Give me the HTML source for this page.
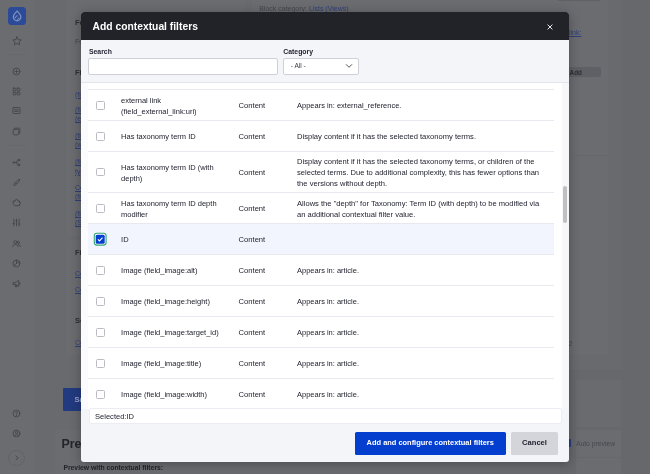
<!DOCTYPE html>
<html lang="en">
<head>
<meta charset="utf-8">
<title>Add contextual filters</title>
<style>
*{box-sizing:border-box;margin:0;padding:0}
html,body{width:650px;height:474px;overflow:hidden;background:#6a6b6f;font-family:"Liberation Sans",Arial,sans-serif;color:#222330}
.abs{position:absolute}
#page{position:absolute;left:0;top:0;width:650px;height:474px;overflow:hidden;background:#696a6e;filter:blur(.45px)}
/* ---------- dimmed page behind overlay ---------- */
#sidebar{position:absolute;z-index:2;left:0;top:0;width:34px;height:474px;background:#6b6c70}
.logo{position:absolute;left:7.600px;top:7.200px;width:18.200px;height:18.200px;border-radius:3.500px;background:#2b4a97}
.sico{position:absolute;left:11.5px;width:10px;height:10px}
.sico svg{display:block;width:10px;height:10px;fill:none;stroke:#44454a;stroke-width:1.05;stroke-linecap:round;stroke-linejoin:round}
.ssep{position:absolute;left:8px;width:18px;height:1px;background:#66676b}
.card{position:absolute;background:#6b6c70;border-radius:3px}
.bgt{position:absolute;white-space:nowrap;color:#2e2f34}
.lnk{color:#313f7a;text-decoration:underline}
/* ---------- modal ---------- */
#modal{position:absolute;z-index:3;left:81px;top:12px;width:488px;height:450px;border-radius:3px;background:#f4f5f9;overflow:hidden;box-shadow:0 2px 12px rgba(0,0,0,.3)}
#mhead{position:absolute;left:0;top:0;width:488px;height:28px;background:#222328}
#mtitle{position:absolute;left:11.6px;top:8px;font-size:10.3px;line-height:14px;font-weight:bold;color:#fff;white-space:nowrap}
#mclose{position:absolute;left:465.3px;top:10.6px;width:8px;height:8px}
#mbody{position:absolute;left:0;top:28px;width:488px;height:369px;background:#fbfbfd}
#filters{position:absolute;left:0;top:0;width:488px;padding-left:7px;height:42.5px;background:#f4f5f9;border-bottom:1px solid #e3e4ea}
.lbl{position:absolute;font-size:6.85px;line-height:8px;font-weight:bold;white-space:nowrap;color:#222330}
.inp{position:absolute;background:#fff;border:1px solid #d0d1d8;border-radius:2px}
#tbl{position:absolute;left:7px;top:43px;width:474px;height:326px;background:#fff;overflow:hidden}
.row{position:absolute;left:0;width:466px;border-top:1px solid #e8e9ee;font-size:7.45px;line-height:11.1px;color:#222330}
.row.sel{background:#f2f5fd}
.cb{position:absolute;left:8.3px;width:8.6px;height:8.6px;border:1px solid #babbc3;border-radius:1.5px;background:#fff}
.c1,.c2,.c3{position:absolute;top:1.3px;bottom:0;display:flex;align-items:center;white-space:nowrap}
.c1{left:33.1px;font-size:7.5px}.c2{left:150.6px;font-size:7.6px}.c3{left:209px;font-size:7.58px}
#sbar{position:absolute;left:481px;top:43px;width:7px;height:326px;background:#f7f7f9}
#sthumb{position:absolute;left:482.4px;top:145.8px;width:3.6px;height:37.2px;border-radius:2px;background:#c0c0c4}
#selbox{position:absolute;left:7.5px;top:368.3px;width:473.5px;height:16.2px;background:#fff;border:1px solid #ecedf2;border-radius:2px;font-size:7.55px;line-height:15.6px;padding-left:5.5px;white-space:nowrap}
.btn{position:absolute;top:420.2px;height:22.4px;border-radius:1.6px;font-size:7.6px;font-weight:bold;line-height:22.4px;text-align:center;white-space:nowrap}
#bprim{left:274px;width:150.5px;background:#033ecf;color:#fff;font-size:7.45px}
#bcanc{left:430px;width:47px;background:#d4d5da;color:#222330}
</style>
</head>
<body>
<div id="page">

  <!-- dimmed admin page -->
  <div id="sidebar">
    <div class="logo">
      <svg viewBox="0 0 18 18" width="18.200" height="18.200" style="display:block"><path d="M9 4c1.300 1.700 3.700 3 3.700 5.900a3.700 3.700 0 0 1-7.400 0C5.300 7 7.700 5.700 9 4z" fill="none" stroke="#7d90be" stroke-width="1.300"/><path d="M6.800 11.300c.5-1.500 1.600-2 2.500-2.900M9.300 12.500c.5-.9 1.300-1.200 1.900-1.800" fill="none" stroke="#7d90be" stroke-width="1.100"/></svg>
    </div>
    <div class="sico" style="top:35.6px"><svg viewBox="0 0 12 12"><path d="M6 1l1.500 3.300 3.500.4-2.600 2.400.7 3.500L6 8.900 2.900 10.600l.7-3.500L1 4.700l3.500-.4z"/></svg></div>
    <div class="ssep" style="top:54px"></div>
    <div class="sico" style="left:12px;width:9px;height:9px;top:66.5px"><svg viewBox="0 0 12 12" style="width:9px;height:9px;stroke-width:1.2"><circle cx="6" cy="6" r="4.600"/><path d="M6 4v4M4 6h4"/></svg></div>
    <div class="sico" style="left:12px;width:9px;height:9px;top:86.5px"><svg viewBox="0 0 12 12" style="width:9px;height:9px;stroke-width:1.2"><rect x="1.500" y="1.500" width="3.600" height="3.600" rx=".8"/><rect x="6.900" y="1.500" width="3.600" height="3.600" rx=".8"/><rect x="1.500" y="6.900" width="3.600" height="3.600" rx=".8"/><rect x="6.900" y="6.900" width="3.600" height="3.600" rx=".8"/></svg></div>
    <div class="sico" style="left:12px;width:9px;height:9px;top:106.3px"><svg viewBox="0 0 12 12" style="width:9px;height:9px;stroke-width:1.2"><rect x="1.200" y="2" width="9.600" height="8" rx="1"/><path d="M3.500 5h5M3.500 7.200h5"/></svg></div>
    <div class="sico" style="left:12px;width:9px;height:9px;top:127.0px"><svg viewBox="0 0 12 12" style="width:9px;height:9px;stroke-width:1.2"><rect x="1.500" y="3" width="7.500" height="7.500" rx="1.500"/><path d="M3.500 3V2.500a1 1 0 0 1 1-1h5a1 1 0 0 1 1 1v5a1 1 0 0 1-1 1H9"/></svg></div>
    <div class="ssep" style="top:145px"></div>
    <div class="sico" style="left:12px;width:9px;height:9px;top:157.5px"><svg viewBox="0 0 12 12" style="width:9px;height:9px;stroke-width:1.2"><circle cx="2.500" cy="6" r="1.200"/><circle cx="9" cy="2.800" r="1.300"/><circle cx="9" cy="9.200" r="1.300"/><path d="M3.700 6h2.500M6.200 6c0-2 1-3.200 1.500-3.200M6.200 6c0 2 1 3.200 1.500 3.200"/></svg></div>
    <div class="sico" style="left:12px;width:9px;height:9px;top:177.9px"><svg viewBox="0 0 12 12" style="width:9px;height:9px;stroke-width:1.2"><path d="M10 2c-2 0-4 2-5 4l1.500 1.500c2-1 3.500-3.500 3.500-5.500zM4.800 6.500c-1.500 0-2.300 1-2.300 3.500 2 0 3.300-.8 3.300-2.500"/></svg></div>
    <div class="sico" style="left:12px;width:9px;height:9px;top:198.0px"><svg viewBox="0 0 12 12" style="width:9px;height:9px;stroke-width:1.2"><path d="M2 4h2.500c-.5-1.500.5-2.200 1.500-2.200s2 .7 1.500 2.200H10v2c1.300-.4 1.800.3 1.800 1s-.5 1.400-1.800 1v2.200H3.500L2 8z"/></svg></div>
    <div class="sico" style="left:12px;width:9px;height:9px;top:217.8px"><svg viewBox="0 0 12 12" style="width:9px;height:9px;stroke-width:1.2"><path d="M2.500 1.500v9M6 1.500v9M9.500 1.500v9M1.500 7.500h2M5 4h2M8.500 8h2"/></svg></div>
    <div class="sico" style="left:12px;width:9px;height:9px;top:238.5px"><svg viewBox="0 0 12 12" style="width:9px;height:9px;stroke-width:1.2"><circle cx="4.500" cy="4.200" r="2"/><circle cx="8.500" cy="4.600" r="1.600"/><path d="M1 10.200c.3-2 1.700-3 3.500-3s3.200 1 3.500 3M8.500 7.500c1.500 0 2.400.9 2.700 2.500"/></svg></div>
    <div class="sico" style="left:12px;width:9px;height:9px;top:258.5px"><svg viewBox="0 0 12 12" style="width:9px;height:9px;stroke-width:1.2"><circle cx="6" cy="6" r="4.600"/><path d="M6 1.400V6l3.800-2.400M6 6L2.600 9"/></svg></div>
    <div class="sico" style="left:12px;width:9px;height:9px;top:279.1px"><svg viewBox="0 0 12 12" style="width:9px;height:9px;stroke-width:1.2"><path d="M2 4.800h2l5-2.800v8L4 7.200H2zM4 7.200l.8 3.300h1.400L5.600 7.600M10.500 5v2"/></svg></div>
    <div class="sico" style="left:12px;width:9px;height:9px;top:408.5px"><svg viewBox="0 0 12 12" style="width:9px;height:9px;stroke-width:1.2"><circle cx="6" cy="6" r="4.600"/><path d="M4.700 4.800c0-1.700 2.700-1.700 2.700 0 0 1-1.400 1-1.400 2.200M6 8.600v.2"/></svg></div>
    <div class="sico" style="left:12px;width:9px;height:9px;top:428.7px"><svg viewBox="0 0 12 12" style="width:9px;height:9px;stroke-width:1.2"><circle cx="6" cy="6" r="4.600"/><circle cx="6" cy="4.800" r="1.500"/><path d="M3.200 9.500c.5-1.400 1.500-2 2.800-2s2.300.6 2.800 2"/></svg></div>
    <div class="abs" style="left:8.200px;top:449.500px;width:16.600px;height:16.600px;border:1px solid #626368;border-radius:50%"></div>
    <div class="sico" style="left:11.800px;top:452.800px"><svg viewBox="0 0 12 12"><path d="M4.800 3.500L7.300 6 4.800 8.500"/></svg></div>
  </div>

  <!-- page container + cards -->
  <div class="abs" style="left:560px;top:0;width:90px;height:474px;background:#67686c"></div>
  <div class="abs" style="left:560px;top:0;width:63px;height:369px;background:#696a6e"></div>
  <div class="card" style="left:67.400px;top:-4px;width:178px;height:240px"></div>
  <div class="bgt" style="left:75px;top:17.500px;font-size:7.500px;line-height:9px;font-weight:bold">Format</div>
  <div class="bgt" style="left:75px;top:36.500px;font-size:7px;line-height:9px;color:#45464c">Format: <span class="lnk">Unformatted list</span></div>
  <div class="bgt" style="left:75px;top:67.500px;font-size:7.500px;line-height:9px;font-weight:bold">Fields</div>
  <div class="bgt lnk" style="left:75px;top:89.700px;font-size:7px;line-height:9.300px">(field_external_link)</div>
  <div class="bgt lnk" style="left:75px;top:105.200px;font-size:7px;line-height:9.300px">(field_external_link:uri)<br>(external link)</div>
  <div class="bgt lnk" style="left:75px;top:131px;font-size:7px;line-height:9.300px">(field_tags)<br>(with taxonomy)</div>
  <div class="bgt lnk" style="left:75px;top:157.300px;font-size:7px;line-height:9.300px">(field_image)<br>type</div>
  <div class="bgt lnk" style="left:75px;top:183px;font-size:7px;line-height:9.300px">Content: Title<br>(field_title)</div>
  <div class="bgt lnk" style="left:75px;top:209px;font-size:7px;line-height:9.300px">(field_summary)<br>(Summary)</div>

  <div class="card" style="left:67.400px;top:240px;width:178px;height:114.500px"></div>
  <div class="bgt" style="left:75px;top:247.500px;font-size:7.500px;line-height:9px;font-weight:bold">Filter criteria</div>
  <div class="bgt lnk" style="left:75px;top:268.500px;font-size:7px;line-height:9px">Content: Published</div>
  <div class="bgt lnk" style="left:75px;top:285px;font-size:7px;line-height:9px">Content: Type</div>
  <div class="bgt" style="left:75px;top:316px;font-size:7.500px;line-height:9px;font-weight:bold">Sort criteria</div>
  <div class="bgt lnk" style="left:75px;top:337.500px;font-size:7px;line-height:9px">Content: Authored on</div>

  <!-- middle / right card -->
  <div class="card" style="left:252px;top:-4px;width:355.700px;height:358.600px"></div>
  <div class="bgt" style="left:259.200px;top:4px;font-size:7px;line-height:9px;color:#45464c">Block category: <span class="lnk">Lists (Views)</span></div>
  <div class="abs" style="left:557px;top:-6px;width:44px;height:6.700px;border-radius:2px;background:#606165"></div>
  <div class="bgt lnk" style="left:569px;top:27.800px;font-size:7px;line-height:9px">link:</div>
  <div class="abs" style="left:566px;top:67.300px;width:35px;height:10px;border-radius:2px;background:#5f6065"></div>
  <div class="bgt" style="left:569.600px;top:68.300px;font-size:6.300px;line-height:9px;font-weight:bold;color:#2c2d32">Add</div>
  <div class="abs" style="left:575px;top:155px;width:32px;height:1px;background:#646569"></div>
  <div class="bgt" style="left:568.600px;top:339.200px;font-size:7px;line-height:9px;color:#45464c">2</div>
  <div class="abs" style="left:575.500px;top:380px;width:45px;height:47px;background:#6a6b6f;border-radius:1px"></div>

  <!-- save button -->
  <div class="abs" style="left:63px;top:388px;width:60px;height:22.500px;border-radius:1px;background:#223a80"></div>
  <div class="bgt" style="left:74.500px;top:394.500px;font-size:7.500px;line-height:10px;font-weight:bold;color:#97a3cc">Save</div>

  <!-- preview card -->
  <div class="card" style="left:54.600px;top:429.700px;width:505px;height:60px"></div>
  <div class="bgt" style="left:61.400px;top:435.500px;font-size:12.400px;line-height:16px;font-weight:bold;color:#232429">Preview</div>
  <div class="bgt" style="left:63.400px;top:463.300px;font-size:6.800px;line-height:9px;font-weight:bold;color:#232429">Preview with contextual filters:</div>
  <div class="abs" style="left:575.500px;top:430.400px;width:45px;height:26.200px;background:#6b6c70;border-radius:1px"></div>
  <div class="abs" style="left:575.500px;top:458.300px;width:45px;height:26.200px;background:#6b6c70;border-radius:1px"></div>
  <div class="abs" style="left:563px;top:438.800px;width:8.400px;height:8px;background:#273d80;border-radius:1px"></div>
  <div class="bgt" style="left:575.900px;top:438.900px;font-size:6.800px;line-height:9px;color:#47484e">Auto preview</div>

  <!-- ============ modal ============ -->
  <div id="modal">
    <div id="mhead">
      <div id="mtitle">Add contextual filters</div>
      <svg id="mclose" viewBox="0 0 8 8"><path d="M1.600 1.600l4.800 4.800M6.400 1.600L1.600 6.400" stroke="#fff" stroke-width=".9" fill="none"/></svg>
    </div>
    <div id="mbody">
      <div id="filters">
        <div class="lbl" style="left:8px;top:8.200px">Search</div>
        <div class="inp" style="left:7px;top:18px;width:190px;height:16.500px"></div>
        <div class="lbl" style="left:202.300px;top:8.200px">Category</div>
        <div class="inp" style="left:202px;top:18px;width:76px;height:16.500px">
          <div class="abs" style="left:6.800px;top:2.900px;font-size:6.600px;line-height:8px;white-space:nowrap;color:#3a3b45">- All -</div>
          <svg class="abs" style="left:60.500px;top:4.200px" width="8" height="6" viewBox="0 0 8 6"><path d="M1 1.300l3 3 3-3" stroke="#55565e" stroke-width="1" fill="none"/></svg>
        </div>
      </div>
      <div id="tbl">
        <div class="row" style="top:-24.700px;height:31.100px;border-top:0">
          <div class="c1">depth)</div>
        </div>
        <div class="row" style="top:6.400px;height:31px">
          <div class="cb" style="top:11px"></div>
          <div class="c1">external link<br>(field_external_link:uri)</div>
          <div class="c2">Content</div>
          <div class="c3" style="font-size:7.490px">Appears in: external_reference.</div>
        </div>
        <div class="row" style="top:37.400px;height:31.100px">
          <div class="cb" style="top:11px"></div>
          <div class="c1" style="top:-.7px">Has taxonomy term ID</div>
          <div class="c2" style="top:-.7px">Content</div>
          <div class="c3" style="top:-.7px">Display content if it has the selected taxonomy terms.</div>
        </div>
        <div class="row" style="top:68px;height:41.100px">
          <div class="cb" style="top:15.800px"></div>
          <div class="c1">Has taxonomy term ID (with<br>depth)</div>
          <div class="c2">Content</div>
          <div class="c3">Display content if it has the selected taxonomy terms, or children of the<br>selected terms. Due to additional complexity, this has fewer options than<br>the versions without depth.</div>
        </div>
        <div class="row" style="top:109.100px;height:30.900px">
          <div class="cb" style="top:11px"></div>
          <div class="c1">Has taxonomy term ID depth<br>modifier</div>
          <div class="c2">Content</div>
          <div class="c3">Allows the "depth" for Taxonomy: Term ID (with depth) to be modified via<br>an additional contextual filter value.</div>
        </div>
        <div class="row sel" style="top:140px;height:31px">
          <svg class="abs" style="left:5px;top:8px" width="15" height="15" viewBox="0 0 15 15"><rect x="1.300" y="1.300" width="11.800" height="11.800" rx="2.600" fill="#fff" stroke="#35a574" stroke-width="1.1"/><rect x="2.700" y="2.700" width="9" height="9" rx="1.500" fill="#033ecf"/><path d="M4.900 7.300l1.600 1.600 3-3.300" stroke="#fff" stroke-width="1.100" fill="none"/></svg>
          <div class="c1">ID</div>
          <div class="c2">Content</div>
        </div>
        <div class="row" style="top:171px;height:31px">
          <div class="cb" style="top:11px"></div>
          <div class="c1">Image (field_image:alt)</div>
          <div class="c2">Content</div>
          <div class="c3" style="font-size:7.490px">Appears in: article.</div>
        </div>
        <div class="row" style="top:202px;height:31px">
          <div class="cb" style="top:11px"></div>
          <div class="c1">Image (field_image:height)</div>
          <div class="c2">Content</div>
          <div class="c3" style="font-size:7.490px">Appears in: article.</div>
        </div>
        <div class="row" style="top:233px;height:31.100px">
          <div class="cb" style="top:11px"></div>
          <div class="c1">Image (field_image:target_id)</div>
          <div class="c2">Content</div>
          <div class="c3" style="font-size:7.490px">Appears in: article.</div>
        </div>
        <div class="row" style="top:264.100px;height:31.200px">
          <div class="cb" style="top:11px"></div>
          <div class="c1">Image (field_image:title)</div>
          <div class="c2">Content</div>
          <div class="c3" style="font-size:7.490px">Appears in: article.</div>
        </div>
        <div class="row" style="top:295.300px;height:31px">
          <div class="cb" style="top:11px"></div>
          <div class="c1">Image (field_image:width)</div>
          <div class="c2">Content</div>
          <div class="c3" style="font-size:7.490px">Appears in: article.</div>
        </div>
      </div>
      <div id="sbar"></div>
      <div id="sthumb"></div>
      <div id="selbox">Selected:ID</div>
    </div>
    <div class="btn" id="bprim">Add and configure contextual filters</div>
    <div class="btn" id="bcanc">Cancel</div>
  </div>

</div>
</body>
</html>
